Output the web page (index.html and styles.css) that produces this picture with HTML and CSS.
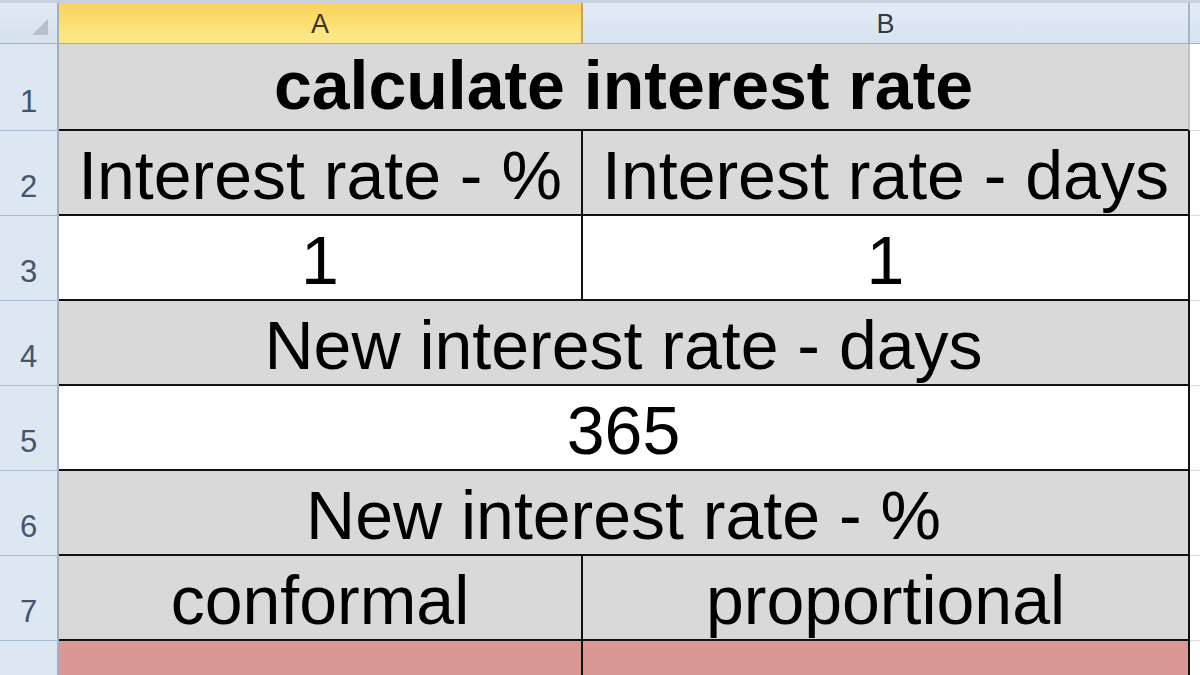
FILE: index.html
```html
<!DOCTYPE html>
<html>
<head>
<meta charset="utf-8">
<link rel="stylesheet" href="styles.css">
</head>
<body>
<div class="sheet">
  <div class="top-strip"></div>

  <div class="corner"><span class="corner-tri"></span></div>
  <div class="col-head col-sel">A</div>
  <div class="col-head">B</div>
  <div class="col-head col-c"></div>

  <div class="row-head">1</div>
  <div class="cell gray merged title no-right">calculate interest rate</div>
  <div class="cell blank"></div>

  <div class="row-head">2</div>
  <div class="cell gray">Interest rate - %</div>
  <div class="cell gray">Interest rate - days</div>
  <div class="cell blank"></div>

  <div class="row-head">3</div>
  <div class="cell white">1</div>
  <div class="cell white">1</div>
  <div class="cell blank"></div>

  <div class="row-head">4</div>
  <div class="cell gray merged">New interest rate - days</div>
  <div class="cell blank"></div>

  <div class="row-head">5</div>
  <div class="cell white merged">365</div>
  <div class="cell blank"></div>

  <div class="row-head">6</div>
  <div class="cell gray merged">New interest rate - %</div>
  <div class="cell blank"></div>

  <div class="row-head">7</div>
  <div class="cell gray">conformal</div>
  <div class="cell gray">proportional</div>
  <div class="cell blank"></div>

  <div class="row-head"></div>
  <div class="cell pink"></div>
  <div class="cell pink"></div>
  <div class="cell blank"></div>
</div>
</body>
</html>
```

FILE: styles.css
```css
html, body {
  margin: 0;
  padding: 0;
  background: #ffffff;
}

body {
  width: 1200px;
  height: 675px;
  overflow: hidden;
  font-family: "Liberation Sans", Arial, sans-serif;
}

.sheet {
  display: grid;
  grid-template-columns: 59px 524px 607px 10px;
  grid-template-rows: 3px 41px 87px repeat(7, 85px);
}

.top-strip {
  grid-column: 1 / span 4;
  background: #c9d1dc;
}

.corner {
  position: relative;
  box-sizing: border-box;
  background: linear-gradient(#e2eaf5, #d6e1ee);
  border-right: 2px solid #9fb0c3;
  border-bottom: 1px solid #9fb3c8;
}

.corner-tri {
  position: absolute;
  right: 9px;
  bottom: 8px;
  width: 0;
  height: 0;
  border-left: 16px solid transparent;
  border-bottom: 16px solid #b6bfca;
}

.col-head {
  box-sizing: border-box;
  display: flex;
  align-items: flex-end;
  justify-content: center;
  padding-bottom: 3px;
  font-size: 27px;
  line-height: normal;
  color: #2e3a46;
  background: linear-gradient(#e3ebf6, #d7e3f0);
  border-right: 2px solid #a4b5c8;
  border-bottom: 1px solid #9fb3c8;
}

.col-sel {
  background: linear-gradient(#f9d25a, #fde47e 70%, #fee88a);
  border-right: 2px solid #c8a54a;
  border-bottom: 1px solid #c8a54a;
  color: #3a3520;
}

.col-c {
  border-right: none;
}

.row-head {
  box-sizing: border-box;
  display: flex;
  align-items: flex-end;
  justify-content: center;
  padding-bottom: 10px;
  font-size: 31px;
  line-height: normal;
  color: #44556b;
  background: #dde7f2;
  border-right: 2px solid #9fb0c3;
  border-bottom: 1px solid #a8bcd1;
}

.cell {
  box-sizing: border-box;
  display: flex;
  align-items: flex-end;
  justify-content: center;
  padding-bottom: 0;
  font-size: 68px;
  line-height: normal;
  color: #000000;
  white-space: nowrap;
  overflow: hidden;
  border-right: 2px solid #111111;
  border-bottom: 2px solid #111111;
}

.merged {
  grid-column: span 2;
}

.title {
  font-weight: bold;
  padding-bottom: 5px;
}

.no-right {
  border-right: 2px solid #c4c4c4;
}

.gray {
  background: #d9d9d9;
}

.white {
  background: #ffffff;
}

.pink {
  background: #da9793;
}

.blank {
  background: #ffffff;
  border-right: none;
  border-bottom: 1px solid #d4dbe5;
}
```
